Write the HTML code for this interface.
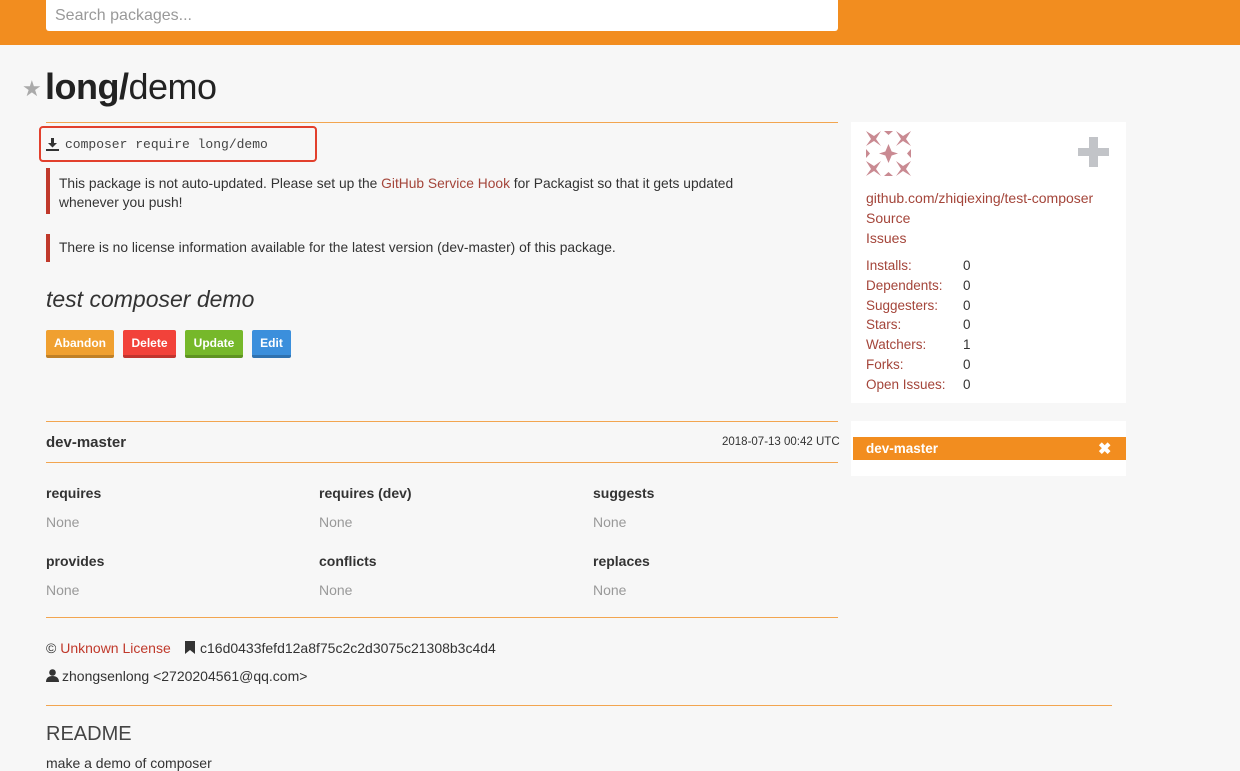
<!DOCTYPE html>
<html><head><meta charset="utf-8"><style>
*{margin:0;padding:0;box-sizing:border-box}
body{width:1240px;height:768px;overflow:hidden;background:#f7f7f7;font-family:"Liberation Sans",sans-serif;color:#333;font-size:13.8px;position:relative}
.a{position:absolute;white-space:nowrap}
.hr{position:absolute;height:1px;background:#f2a550}
.lk{color:#a4453a}
.btn{position:absolute;top:330px;height:28px;color:#fff;font-weight:bold;font-size:12px;line-height:27px;text-align:center;border-radius:2px;border-bottom:3px solid rgba(0,0,0,.2)}
.lbl{font-weight:bold;font-size:14px}
.none{color:#999;font-size:14px}
.st div{height:19.8px}
</style></head><body>
<div class="a" style="left:0;top:0;width:1240px;height:45px;background:#f28d1f"></div>
<div class="a" style="left:46px;top:0;width:792px;height:31px;background:#fff;border-radius:0 0 3px 3px"></div>
<div class="a" style="left:55px;top:7px;font-size:16px;color:#999">Search packages...</div>

<div class="a" style="left:22px;top:76px;font-size:22px;color:#aaa">★</div>
<div class="a" style="left:45px;top:66px;font-size:36px;color:#222;letter-spacing:-0.5px"><b>long/</b>demo</div>
<div class="hr" style="left:46px;top:122px;width:792px"></div>

<div class="a" style="left:39px;top:126px;width:278px;height:36px;border:2px solid #e2402d;border-radius:4px"></div>
<svg class="a" style="left:46px;top:138px" width="13" height="13" viewBox="0 0 13 13"><path d="M5 0h3v5h3l-4.5 4.5L2 5h3z" fill="#333"/><rect x="0" y="11" width="13" height="2" fill="#333"/></svg>
<div class="a" style="left:65px;top:137px;font-family:'Liberation Mono',monospace;font-size:13px;color:#444">composer require long/demo</div>

<div class="a" style="left:46px;top:168px;width:4px;height:46px;background:#c0392b"></div>
<div class="a" style="left:59px;top:174px;line-height:19px">This package is not auto-updated. Please set up the <span class="lk">GitHub Service Hook</span> for Packagist so that it gets updated<br>whenever you push!</div>
<div class="a" style="left:46px;top:234px;width:4px;height:28px;background:#c0392b"></div>
<div class="a" style="left:59px;top:240px">There is no license information available for the latest version (dev-master) of this package.</div>

<div class="a" style="left:46px;top:286px;font-size:23px;font-style:italic;color:#333">test composer demo</div>

<div class="btn" style="left:46px;width:68px;background:#f0a030">Abandon</div>
<div class="btn" style="left:123px;width:53px;background:#f2423a">Delete</div>
<div class="btn" style="left:185px;width:58px;background:#76b82a">Update</div>
<div class="btn" style="left:252px;width:39px;background:#3b8fdc">Edit</div>

<div class="hr" style="left:46px;top:421px;width:792px"></div>
<div class="a" style="left:46px;top:434px;font-weight:bold;font-size:15px">dev-master</div>
<div class="a" style="left:722px;top:436px;font-size:11.5px">2018-07-13 00:42 UTC</div>
<div class="hr" style="left:46px;top:462px;width:792px"></div>

<div class="a lbl" style="left:46px;top:485px">requires</div>
<div class="a lbl" style="left:319px;top:485px">requires (dev)</div>
<div class="a lbl" style="left:593px;top:485px">suggests</div>
<div class="a none" style="left:46px;top:514px">None</div>
<div class="a none" style="left:319px;top:514px">None</div>
<div class="a none" style="left:593px;top:514px">None</div>
<div class="a lbl" style="left:46px;top:553px">provides</div>
<div class="a lbl" style="left:319px;top:553px">conflicts</div>
<div class="a lbl" style="left:593px;top:553px">replaces</div>
<div class="a none" style="left:46px;top:582px">None</div>
<div class="a none" style="left:319px;top:582px">None</div>
<div class="a none" style="left:593px;top:582px">None</div>
<div class="hr" style="left:46px;top:617px;width:792px"></div>

<div class="a" style="left:46px;top:640px;font-size:14px">© <span style="color:#c0392b">Unknown License</span></div>
<svg class="a" style="left:185px;top:641px" width="10" height="13" viewBox="0 0 10 13"><path d="M0 0h10v13L5 9 0 13z" fill="#333"/></svg>
<div class="a" style="left:200px;top:640px;font-size:14px">c16d0433fefd12a8f75c2c2d3075c21308b3c4d4</div>
<svg class="a" style="left:46px;top:669px" width="13" height="13" viewBox="0 0 13 13"><circle cx="6.5" cy="3.5" r="3.3" fill="#333"/><path d="M0 13c0-4 2.5-6 6.5-6s6.5 2 6.5 6z" fill="#333"/></svg>
<div class="a" style="left:62px;top:668px;font-size:14px">zhongsenlong &lt;2720204561@qq.com&gt;</div>
<div class="hr" style="left:46px;top:705px;width:1066px"></div>
<div class="a" style="left:46px;top:723px;font-size:20px;color:#444">README</div>
<div class="a" style="left:46px;top:755px;font-size:14px">make a demo of composer</div>

<div class="a" style="left:851px;top:122px;width:275px;height:281px;background:#fff"></div>
<svg class="a" style="left:866px;top:131px" width="45" height="45" viewBox="0 0 45 45" fill="#c98a92"><path d="M0 0l8 5 7-5-5 8 5 7-7-5-8 5 5-7z M30 0l7 5 8-5-5 8 5 7-8-5-7 5 5-7z M0 30l8 5 7-5-5 8 5 7-7-5-8 5 5-7z M30 30l7 5 8-5-5 8 5 7-8-5-7 5 5-7z M22.5 13l4 9.5-4 9.5-4-9.5z M13 22.5l9.5-3 9.5 3-9.5 3z M18 0h9l-4.5 4z M18 45h9l-4.5-4z M0 18v9l4-4.5z M45 18v9l-4-4.5z"/></svg>
<div class="a" style="left:1078px;top:148px;width:31px;height:8px;background:#c2c4c8"></div>
<div class="a" style="left:1089px;top:137px;width:9px;height:30px;background:#c2c4c8"></div>
<div class="a lk" style="left:866px;top:188px;line-height:20px;font-size:14px">github.com/zhiqiexing/test-composer<br>Source<br>Issues</div>
<div class="a st lk" style="left:866px;top:256px;line-height:19.8px;font-size:13.5px"><div>Installs:</div><div>Dependents:</div><div>Suggesters:</div><div>Stars:</div><div>Watchers:</div><div>Forks:</div><div>Open Issues:</div></div>
<div class="a st" style="left:963px;top:256px;line-height:19.8px;font-size:13.5px"><div>0</div><div>0</div><div>0</div><div>0</div><div>1</div><div>0</div><div>0</div></div>

<div class="a" style="left:851px;top:421px;width:275px;height:55px;background:#fff"></div>
<div class="a" style="left:853px;top:437px;width:273px;height:23px;background:#f28d1f"></div>
<div class="a" style="left:866px;top:441px;color:#fff;font-weight:bold;font-size:13.5px">dev-master</div>
<div class="a" style="left:1098px;top:439px;color:#fff;font-weight:bold;font-size:16px">✖</div>
</body></html>
